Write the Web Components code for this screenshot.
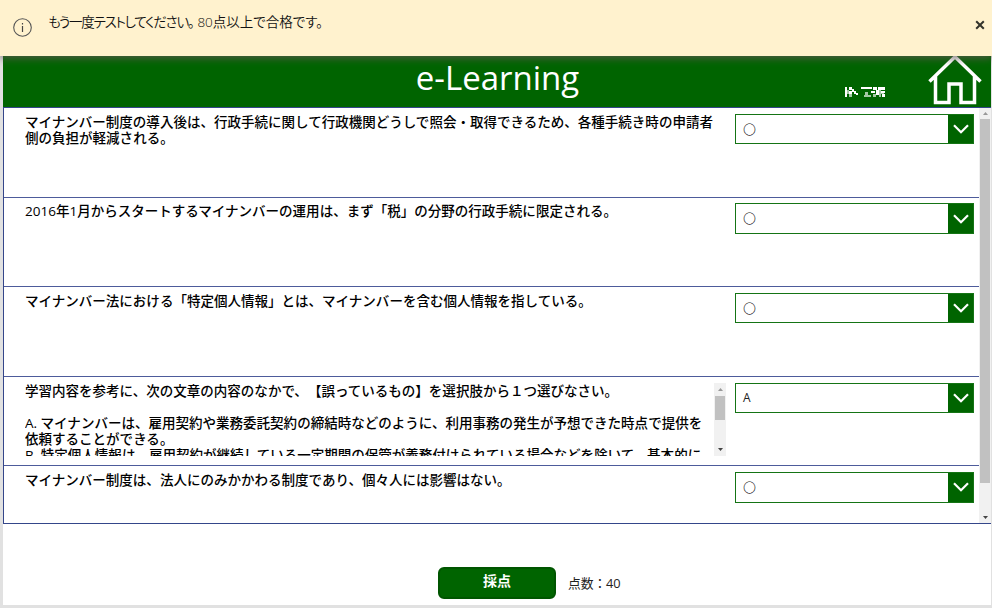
<!DOCTYPE html>
<html lang="ja"><head><meta charset="utf-8"><title>e-Learning</title>
<style>
html,body{margin:0;height:100%;overflow:hidden}
body{background:#e1e1e1;font-family:"Open Sans","Noto Sans CJK JP",sans-serif;text-spacing-trim:space-all}
</style></head><body>
<learning-app></learning-app>
<script>
const define=(name,html,setup)=>{
  const t=document.createElement('template');t.innerHTML=html;
  customElements.define(name,class extends HTMLElement{
    constructor(){super();this.attachShadow({mode:'open'}).append(t.content.cloneNode(true));}
    connectedCallback(){if(setup)setup(this,this.shadowRoot);}
  });
};

define('notice-bar',`<style>
:host{display:flex;box-sizing:border-box;height:56px;background:#fff2ce;color:#111;padding:0 6px 0 13px;box-shadow:0 2px 8px rgba(100,85,85,.85);position:relative;z-index:2}
.info{width:19px;height:19px;margin-top:18px;flex:none}
p{margin:11px 0 0 16px;font-size:13.5px;line-height:23px;font-weight:350;white-space:nowrap;flex:1;font-feature-settings:"palt"}
::slotted(span){letter-spacing:-1.25px;margin-right:4px}
.x{width:12px;height:12px;margin-top:19px}
</style>
<svg class="info" viewBox="0 0 19 19"><circle cx="9.5" cy="9.5" r="8.8" fill="none" stroke="#555" stroke-width="1.1"/><path d="M9.5 5v1.5M9.5 8v6" stroke="#444" stroke-width="1.2"/></svg>
<p><slot></slot></p>
<svg class="x" viewBox="0 0 12 12"><path d="M2.200 2.200l7.600 7.600M9.800 2.200l-7.600 7.600" stroke="#33332b" stroke-width="2"/></svg>`);

define('app-header',`<style>
:host{display:grid;grid-template-columns:1fr;height:51px;background:#006400;color:#fff;position:relative}
h1{margin:0;font-size:33px;font-weight:400;line-height:44px;text-align:center;padding-left:1px}
.user{position:absolute;left:842px;top:31px;width:41px;height:11px}
.home{position:absolute;left:925px;top:0;width:54px;height:50px;z-index:1}
</style>
<h1><slot></slot></h1>
<svg class="user" viewBox="0 0 41 11" shape-rendering="crispEdges"><path fill="#fff" d="M0 0h2v10H0zM4 0h3v3H4zM4 4h3v3H4zM7 2h2v3H7zM9 4h2v3H9zM11 6h2v2h-2zM16 0h11v2H16zM28 0h4v3h-4zM26 4h4v2h-4zM33 0h7v3h-7zM31 3h3v5h-3zM36 4h4v2h-4zM37 7h3v3h-3z"/><path fill="#fff" opacity=".65" d="M2 3h2v4H2zM4 7h3v3H4zM20 5h3v3h-3zM19 8h7v2h-7zM28 7h3v3h-3zM34 3h2v7h-2zM36 6h3v1h-3z"/></svg>
<svg class="home" viewBox="0 0 54 50"><path d="M1.500 25.500L27 .8l25.500 24.700M7.500 20.500v26H21V28h12v18.500h13.500v-26" fill="none" stroke="#fff" stroke-width="3.500"/></svg>`);

define('answer-select',`<style>
:host{display:flex;box-sizing:border-box;width:239px;height:30.400px;border:1.500px solid #157415;background:#fff}
span{flex:1;font-size:12px;line-height:28px;padding-left:7px;color:#222}
:host([mark]) span{font-size:13px;font-weight:300}
i{width:25px;background:#006400;display:flex;align-items:center;justify-content:center}
svg{width:16px;height:10px}
</style><span><slot></slot></span><i><svg viewBox="0 0 16 10"><path d="M1 1.200l7 7 7-7" fill="none" stroke="#fff" stroke-width="2.200"/></svg></i>`);

define('scroll-rail',`<style>
:host{display:flex;flex-direction:column;align-items:center;background:#f1f1f1;box-sizing:border-box}
b{display:block;background:#c1c1c1;width:calc(100% - 2px);height:var(--thumb)}
svg{width:5px;height:3px;margin:var(--arrow) 0}
.end{margin-top:auto}
</style><svg viewBox="0 0 5 3"><path d="M0 3L2.500 0 5 3z" fill="#999"/></svg><b></b><svg class="end" viewBox="0 0 5 3"><path d="M0 0h5L2.500 3z" fill="#444"/></svg>`);

define('quiz-row',`<style>
:host{display:grid;grid-template-columns:701px 239px;column-gap:9px;box-sizing:border-box;height:89.600px;padding:5.800px 0 0 21px;border-bottom:1px solid #4d5b9b;align-items:start}
:host(:last-child){border-bottom:0}
.q{display:flex;align-items:flex-start}
.text{flex:1;height:73px;overflow:hidden;font-size:13.530px;line-height:16px;color:#000;font-weight:500;white-space:pre}
scroll-rail{display:none;width:12px;height:73px;--thumb:24px;--arrow:5px}
:host([long]) scroll-rail{display:flex}
</style><div class="q"><div class="text"><slot></slot></div><scroll-rail></scroll-rail></div><answer-select></answer-select>`,
(el,root)=>{const s=root.querySelector('answer-select');s.textContent=el.getAttribute('answer');s.toggleAttribute('mark',s.textContent!=='A');});

define('quiz-list',`<style>
:host{display:flex;box-sizing:border-box;height:417px;border:1px solid #34468a;border-right:0;overflow:hidden;background:#fff}
.rows{width:975px;flex:none;overflow:hidden}
scroll-rail{flex:1;--thumb:364px;--arrow:4px}
</style><div class="rows"><slot></slot></div><scroll-rail></scroll-rail>`);

define('score-footer',`<style>
:host{display:flex;align-items:center;padding:43px 0 0 435px}
button{box-sizing:border-box;width:118px;height:32px;border:2px solid #005500;border-radius:6px;background:#006400;color:#fff;font:bold 14px/24px "Open Sans","Noto Sans CJK JP",sans-serif;padding:0 0 4px}
span{font-size:12.800px;margin-left:12px;color:#222;letter-spacing:-.1px;padding-bottom:2px}
</style><button>採点</button><span>点数：40</span>`);

define('learning-app',`<style>
:host{display:block;height:608px;overflow:hidden}
main{margin-left:3px;width:988px;height:549px;background:#fff}
</style>
<notice-bar><span>もう一度テストしてください。</span>80点以上で合格です。</notice-bar>
<main><app-header>e-Learning</app-header>
<quiz-list>
<quiz-row answer="〇">マイナンバー制度の導入後は、行政手続に関して行政機関どうしで照会・取得できるため、各種手続き時の申請者
側の負担が軽減される。</quiz-row>
<quiz-row answer="〇">2016年1月からスタートするマイナンバーの運用は、まず「税」の分野の行政手続に限定される。</quiz-row>
<quiz-row answer="〇">マイナンバー法における「特定個人情報」とは、マイナンバーを含む個人情報を指している。</quiz-row>
<quiz-row long answer="A">学習内容を参考に、次の文章の内容のなかで、【誤っているもの】を選択肢から１つ選びなさい。

A. マイナンバーは、雇用契約や業務委託契約の締結時などのように、利用事務の発生が予想できた時点で提供を
依頼することができる。
B. 特定個人情報は、雇用契約が継続している一定期間の保管が義務付けられている場合などを除いて、基本的に</quiz-row>
<quiz-row answer="〇">マイナンバー制度は、法人にのみかかわる制度であり、個々人には影響はない。</quiz-row>
</quiz-list>
<score-footer></score-footer></main>`);
</script></body></html>
